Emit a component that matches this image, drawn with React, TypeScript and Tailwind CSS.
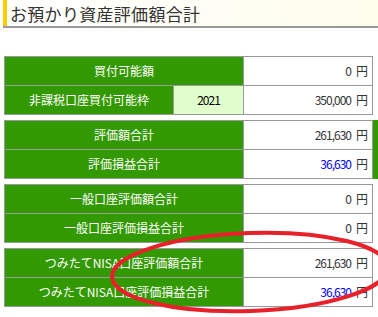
import React from "react";

type RowProps = {
  label: string;
  value: string;
  blue?: boolean;
  year?: string;
  first?: boolean;
};

function Row({ label, value, blue, year, first }: RowProps) {
  return (
    <div className={first ? "flex h-[28px]" : "flex h-[29px] border-t border-[#999]"}>
      <div
        className={
          (year ? "w-[168px]" : "w-[238px]") +
          " bg-[#339900] text-white flex items-center justify-center text-[12px] leading-none"
        }
      >
        {label}
      </div>
      {year ? (
        <div className="w-[70px] border-l border-[#999] bg-[#e0ffcc] flex items-center justify-center text-[12px] leading-none text-black">
          <span className="tracking-[-1px]">{year}</span>
        </div>
      ) : null}
      <div className="flex-1 border-l border-[#999] bg-white flex items-center justify-end pr-[4px] text-[12px] leading-none text-[#333]">
        <span className={blue ? "tracking-[-1px] text-[#0000ff]" : "tracking-[-1px]"}>{value}</span>
        <span className="ml-[5px]">円</span>
      </div>
    </div>
  );
}

function Table({ children }: { children: React.ReactNode }) {
  return <div className="ml-[4px] w-[369px] border border-[#999]">{children}</div>;
}

export default function App() {
  return (
    <div className="relative w-[378px] h-[317px] overflow-hidden bg-white font-['Noto_Sans_CJK_JP',sans-serif]">
      <div className="ml-[3px] h-[28px] border-b-2 border-[#999] flex items-stretch bg-linear-to-r from-white to-[#fffdec]">
        <div className="w-[4px] bg-[#ffcc00]" />
        <div className="pl-[3px] flex items-center text-[17px] tracking-[0.3px] leading-none text-[#333]">
          お預かり資産評価額合計
        </div>
      </div>

      <div className="mt-[28px]">
        <Table>
          <Row first label="買付可能額" value="0" />
          <Row label="非課税口座買付可能枠" year="2021" value="350,000" />
        </Table>
      </div>

      <div className="mt-[5px] flex">
        <Table>
          <Row first label="評価額合計" value="261,630" />
          <Row label="評価損益合計" value="36,630" blue />
        </Table>
        <div className="w-[5px] bg-[#339900]" />
      </div>

      <div className="mt-[5px]">
        <Table>
          <Row first label="一般口座評価額合計" value="0" />
          <Row label="一般口座評価損益合計" value="0" />
        </Table>
      </div>

      <div className="mt-[5px]">
        <Table>
          <Row first label="つみたてNISA口座評価額合計" value="261,630" />
          <Row label="つみたてNISA口座評価損益合計" value="36,630" blue />
        </Table>
      </div>

      <svg
        className="absolute left-0 top-0 pointer-events-none"
        width="378"
        height="317"
        viewBox="0 0 378 317"
      >
        <ellipse
          cx="250"
          cy="272"
          rx="138"
          ry="39"
          fill="none"
          stroke="#e8202a"
          strokeWidth="4"
          transform="rotate(-2 250 272)"
        />
      </svg>
    </div>
  );
}
